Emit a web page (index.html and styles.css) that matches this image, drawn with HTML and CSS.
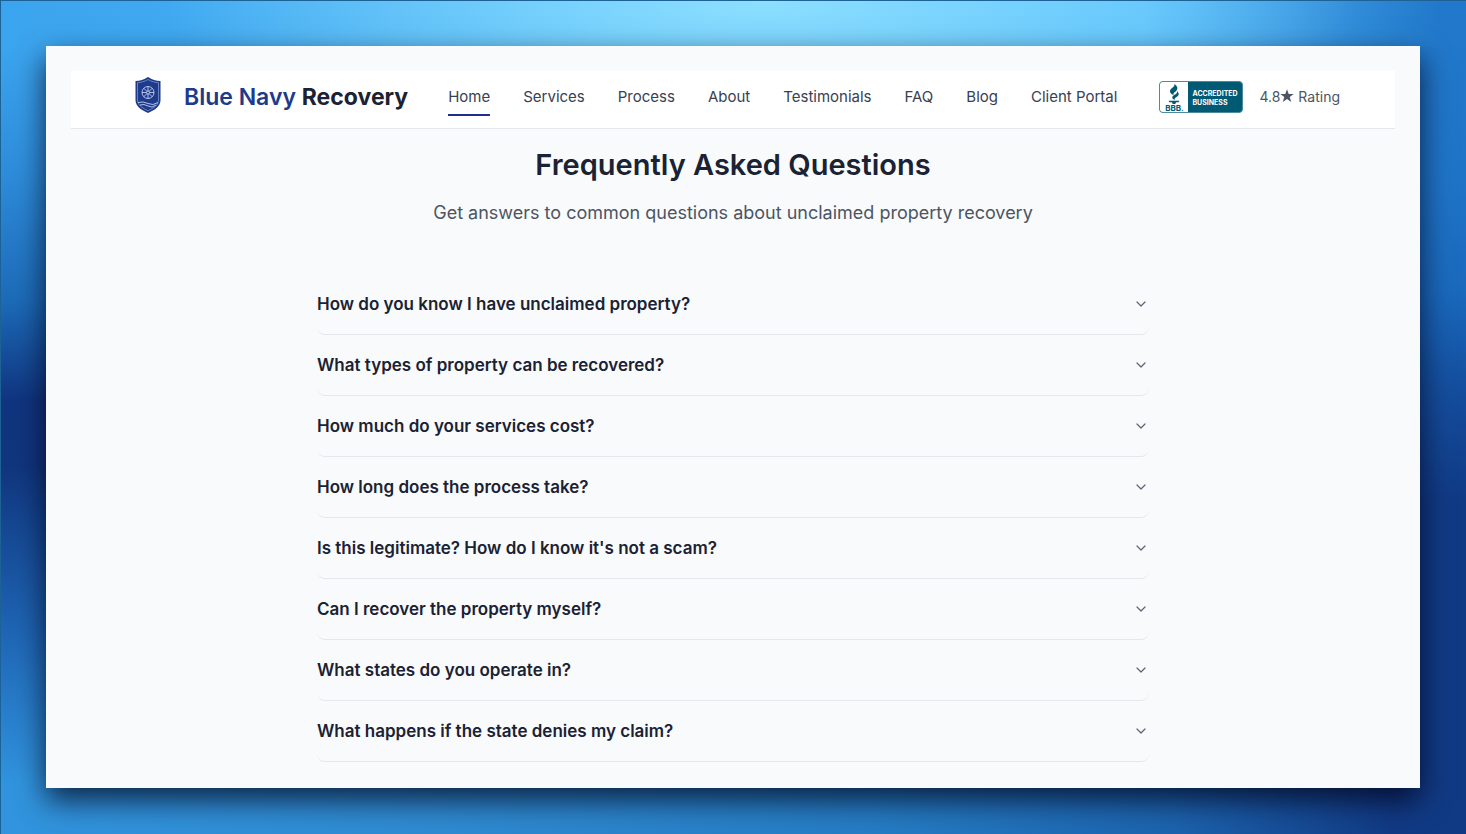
FILE: index.html
```html
<!DOCTYPE html>
<html lang="en">
<head>
    <meta charset="UTF-8">
    <meta name="viewport" content="width=device-width, initial-scale=1.0">
    <title>Blue Navy Recovery - FAQ</title>
    <link rel="stylesheet" href="styles.css">
</head>
<body>

    <div class="window">
        <header class="site-header">
            <a class="brand" href="#">
                <svg class="brand-logo" viewBox="0 0 26 36" aria-hidden="true">
                    <path d="M13 0C17 3 21 3.800 25.500 4V23C25.500 29 20 33 13 36C6 33 .5 29 .5 23V4C5 3.800 9 3 13 0Z" fill="#1e3a8a"/>
                    <path d="M13 2.500C16.500 4.600 20 5.400 23.500 5.700V23C23.500 27.600 19 31 13 33.700C7 31 2.500 27.600 2.500 23V5.700C6 5.400 9.500 4.600 13 2.500Z" fill="none" stroke="#8aa0dc" stroke-width=".7"/>
                    <g fill="none" stroke="#c3cff2" stroke-width=".9">
                        <circle cx="13" cy="15.500" r="6"/>
                        <circle cx="13" cy="15.500" r="1.500"/>
                        <path d="M13 9.500V14M13 17V21.500M7 15.500H11.500M14.500 15.500H19M8.800 11.300L12 14.500M14 16.500L17.200 19.700M17.200 11.300L14 14.500M12 16.500L8.800 19.700"/>
                        <path d="M3 25.500Q8 24 13 26.500T23 25.500M5 28Q9 26.500 13 29T21 28"/>
                    </g>
                </svg>
                <span class="brand-name">Blue Navy <strong>Recovery</strong></span>
            </a>

            <nav class="main-nav">
                <a class="active" href="#">Home</a>
                <a href="#">Services</a>
                <a href="#">Process</a>
                <a href="#">About</a>
                <a href="#">Testimonials</a>
                <a href="#">FAQ</a>
                <a href="#">Blog</a>
                <a href="#">Client Portal</a>
            </nav>

            <div class="trust">
                <a class="bbb" href="#">
                    <span class="bbb-mark">
                        <svg viewBox="0 0 16 20" aria-hidden="true">
                            <path d="M8.500 0C11 2 12.500 4 10.500 6.500C9 8.300 6.500 9 7.800 11.200C3.500 9.500 3 6.500 5.500 4.500C7.300 3 8.800 2 8.500 0Z" fill="#015a74"/>
                            <path d="M11 7.200C13.800 9.500 13 11.500 10.500 13C9 14 8.200 14.500 8.800 16C6 15 5.500 13 7.500 11.500C9.500 10 11.500 9.500 11 7.200Z" fill="#015a74"/>
                            <path d="M2.500 16.800H13.500L12.500 18.300H10L9.300 20H6.700L6 18.300H3.500Z" fill="#015a74"/>
                        </svg>
                        <span>BBB.</span>
                    </span>
                    <span class="bbb-text">ACCREDITED<br>BUSINESS</span>
                </a>
                <span class="rating">4.8<svg class="star" viewBox="0 0 14 14" aria-hidden="true"><path d="M7 .3L8.700 5H13.700L9.700 8L11.200 13L7 10L2.800 13L4.300 8L.3 5H5.300Z" fill="#4b5563"/></svg> Rating</span>
            </div>
        </header>

        <main class="faq">
            <h1>Frequently Asked Questions</h1>
            <p class="subtitle">Get answers to common questions about unclaimed property recovery</p>

            <div class="faq-list">
                <button class="faq-item" type="button">How do you know I have unclaimed property?
                    <svg class="chevron" viewBox="0 0 16 16" aria-hidden="true"><path d="M4 6L8 10L12 6"/></svg>
                </button>
                <button class="faq-item" type="button">What types of property can be recovered?
                    <svg class="chevron" viewBox="0 0 16 16" aria-hidden="true"><path d="M4 6L8 10L12 6"/></svg>
                </button>
                <button class="faq-item" type="button">How much do your services cost?
                    <svg class="chevron" viewBox="0 0 16 16" aria-hidden="true"><path d="M4 6L8 10L12 6"/></svg>
                </button>
                <button class="faq-item" type="button">How long does the process take?
                    <svg class="chevron" viewBox="0 0 16 16" aria-hidden="true"><path d="M4 6L8 10L12 6"/></svg>
                </button>
                <button class="faq-item" type="button">Is this legitimate? How do I know it's not a scam?
                    <svg class="chevron" viewBox="0 0 16 16" aria-hidden="true"><path d="M4 6L8 10L12 6"/></svg>
                </button>
                <button class="faq-item" type="button">Can I recover the property myself?
                    <svg class="chevron" viewBox="0 0 16 16" aria-hidden="true"><path d="M4 6L8 10L12 6"/></svg>
                </button>
                <button class="faq-item" type="button">What states do you operate in?
                    <svg class="chevron" viewBox="0 0 16 16" aria-hidden="true"><path d="M4 6L8 10L12 6"/></svg>
                </button>
                <button class="faq-item" type="button">What happens if the state denies my claim?
                    <svg class="chevron" viewBox="0 0 16 16" aria-hidden="true"><path d="M4 6L8 10L12 6"/></svg>
                </button>
            </div>
        </main>
    </div>

</body>
</html>
```
FILE: styles.css
```css
* {
    box-sizing: border-box;
}
body {
    margin: 0;
    min-height: 100vh;
    padding: 45px 46px 46px 45px;
    border-top: 1px solid #1c6294;
    border-left: 1px solid #1c6294;
    font-family: Inter, "Liberation Sans", sans-serif;
    color: #1a2233;
    /* Blue wallpaper, one gradient for each edge of the page */
    background:
        radial-gradient(ellipse 600px 170px at 52% 0, #8cdfff, transparent),
        linear-gradient(90deg, #3ba4ee 0, #3fa8f0 10%, #55bdfb 50%, #55bdfb 78%, #2279cb 98%) top / 100% 47px no-repeat,
        linear-gradient(90deg, #3194de 0, #2f8bd2 30%, #257cc4 60%, #1c63ae 80%, #113a85 95%) bottom / 100% 47px no-repeat,
        linear-gradient(#3ba4ee 0, #3ba4ee 6%, #2f8edc 20%, #1d6bb8 36%, #103580 48%, #10367f 56%, #1f66b5 76%, #3194de 94%) left / 50% 100% no-repeat,
        linear-gradient(#2279cb 0, #1f74c8 22%, #1a69bd 35%, #154f9f 46%, #113a85 60%, #113a85 100%) right / 50% 100% no-repeat;
}
.window {
    padding: 25px 25px 26px;
    background-color: #f9fafc;
    box-shadow: 0 12px 28px rgba(0, 0, 20, 0.75);
}
a {
    color: inherit;
    text-decoration: none;
}

/* Header */
.site-header {
    display: flex;
    align-items: center;
    height: 58px;
    padding: 0 55px 6px 64px;
    background-color: #fff;
    border-bottom: 1px solid #e5e7eb;
}
.brand {
    display: flex;
    align-items: center;
    gap: 23px;
    margin-right: 40px;
}
.brand-logo {
    width: 26px;
    height: 36px;
    margin-bottom: 4px;
}
.brand-name {
    font-size: 23px;
    font-weight: 600;
    color: #1e3a8a;
    white-space: nowrap;
}
.brand-name strong {
    font-weight: 700;
    color: #1a2233;
}
.main-nav {
    display: flex;
    gap: 33px;
    font-size: 15px;
    line-height: 24px;
    color: #374151;
    white-space: nowrap;
}
.main-nav a {
    padding: 8px 0 5px;
    border-bottom: 2px solid transparent;
}
.main-nav .active {
    border-color: #1e2f8f;
}
.trust {
    display: flex;
    align-items: center;
    gap: 16px;
    margin-left: auto;
}
.bbb {
    display: flex;
    width: 84px;
    height: 32px;
    overflow: hidden;
    border: 1px solid #4d8b9d;
    border-radius: 4px;
    background-color: #015a74;
}
.bbb-mark {
    display: flex;
    flex-direction: column;
    align-items: center;
    width: 28px;
    padding-top: 2px;
    background-color: #fff;
    font-size: 8px;
    font-weight: 700;
    line-height: 8px;
    color: #015a74;
}
.bbb-mark svg {
    width: 16px;
    height: 20px;
}
.bbb-text {
    padding: 7px 0 0 4px;
    font-size: 7px;
    font-weight: 700;
    line-height: 9px;
    color: #fff;
}
.rating {
    font-size: 14px;
    color: #4b5563;
    white-space: nowrap;
}
.star {
    width: 14px;
    height: 14px;
    vertical-align: -1px;
}

/* FAQ */
.faq {
    max-width: 832px;
    margin: 0 auto;
    padding-top: 16px;
}
.faq h1 {
    margin: 0 0 14px;
    font-size: 29px;
    font-weight: 600;
    line-height: 40px;
    text-align: center;
}
.subtitle {
    margin: 0 0 47px;
    font-size: 18px;
    line-height: 28px;
    text-align: center;
    color: #4b5563;
}
.faq-item {
    display: flex;
    align-items: center;
    justify-content: space-between;
    width: 100%;
    height: 61px;
    padding: 0;
    border: none;
    border-bottom: 1px solid #e5e7eb;
    border-radius: 8px;
    background: none;
    font-family: inherit;
    font-size: 17px;
    font-weight: 600;
    color: #1a2233;
    text-align: left;
    cursor: pointer;
}
.chevron {
    width: 16px;
    height: 16px;
    fill: none;
    stroke: #5b6475;
    stroke-width: 1.2;
    stroke-linecap: round;
    stroke-linejoin: round;
}
```
